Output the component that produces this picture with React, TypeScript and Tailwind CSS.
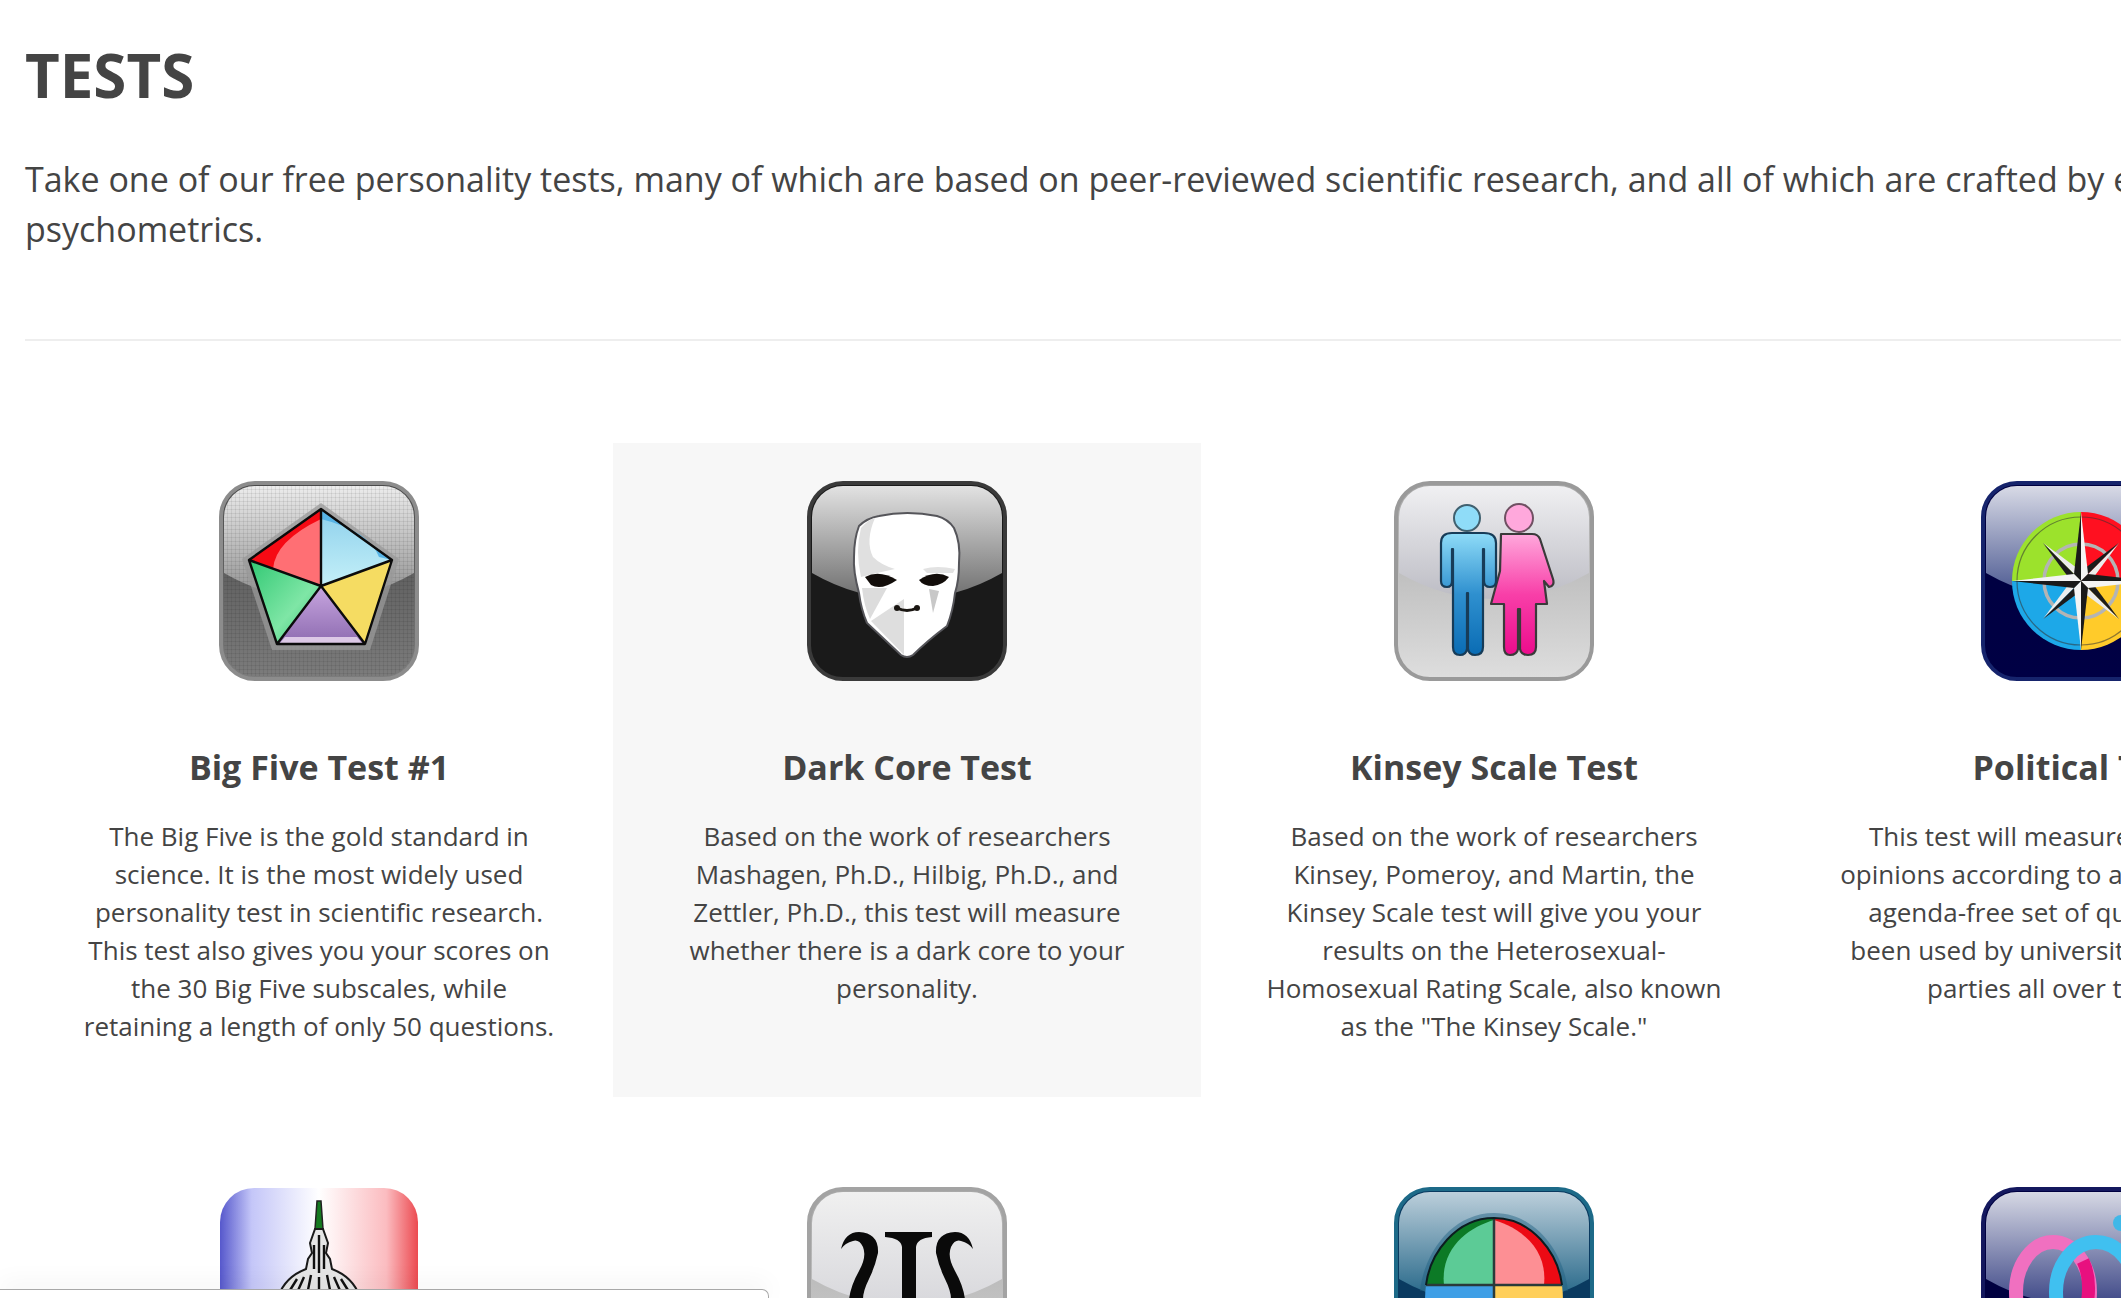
import type { ReactNode } from "react";

interface IconFrameProps {
  id: string;
  border: string;
  glossTop: string;
  glossBottom: string;
  lowerTop: string;
  lowerBottom: string;
  children: ReactNode;
}

// shared glossy rounded square that every test icon sits on
function IconFrame({ id, border, glossTop, glossBottom, lowerTop, lowerBottom, children }: IconFrameProps) {
  return (
    <svg viewBox="0 0 200 200" className="w-[200px] h-[200px] mx-auto block blur-[0.7px]">
      <defs>
        <linearGradient id={`${id}-gloss`} x1="0" y1="0" x2="0" y2="1">
          <stop offset="0" stopColor={glossTop} />
          <stop offset="1" stopColor={glossBottom} />
        </linearGradient>
        <linearGradient id={`${id}-lower`} x1="0" y1="0" x2="0" y2="1">
          <stop offset="0" stopColor={lowerTop} />
          <stop offset="1" stopColor={lowerBottom} />
        </linearGradient>
      </defs>
      <rect x="2" y="2" width="196" height="196" rx="34" fill={`url(#${id}-lower)`} stroke={border} strokeWidth="4" />
      <path
        d="M5 92V36A31 31 0 0 1 36 5H164A31 31 0 0 1 195 36V92Q150 118 100 118T5 92Z"
        fill={`url(#${id}-gloss)`}
      />
      {children}
    </svg>
  );
}

function PentagonIcon() {
  return (
    <IconFrame id="pent" border="#8c8c8c" glossTop="#ececec" glossBottom="#8f8f8f" lowerTop="#4a4a4a" lowerBottom="#7c7c7c">
      <defs>
        <pattern id="weave" width="4" height="4" patternUnits="userSpaceOnUse">
          <path d="M0 0H4M0 0V4" stroke="#000" strokeOpacity="0.14" strokeWidth="1" />
        </pattern>
        <linearGradient id="sky" x1="0" y1="0" x2="0" y2="1">
          <stop offset="0" stopColor="#8ed0ec" />
          <stop offset="1" stopColor="#c4f0f8" />
        </linearGradient>
        <linearGradient id="leaf" x1="0" y1="0" x2="1" y2="1">
          <stop offset="0" stopColor="#30c873" />
          <stop offset="0.6" stopColor="#7fe6a6" />
          <stop offset="1" stopColor="#2fc56e" />
        </linearGradient>
        <linearGradient id="plum" x1="0" y1="0" x2="0" y2="1">
          <stop offset="0" stopColor="#c8a6e0" />
          <stop offset="1" stopColor="#8d6bb0" />
        </linearGradient>
      </defs>
      <rect x="5" y="5" width="190" height="190" rx="31" fill="url(#weave)" />
      <path d="M102 22L180 78L151 169H53L23 78Z" fill="#9a9a9a" opacity="0.75" />
      <path d="M102 28L30 79L102 105Z" fill="#ff6f74" />
      <path d="M102 28L30 79L54 88Q56 60 102 38Z" fill="#f60a14" />
      <path d="M102 28V105L173 79Z" fill="url(#sky)" />
      <path d="M102 28V38Q150 50 160 76L173 79Z" fill="#58b4e6" />
      <path d="M30 79L58 163L102 105Z" fill="url(#leaf)" />
      <path d="M173 79L146 163L102 105Z" fill="#f5dc62" />
      <path d="M58 163H146L102 105Z" fill="url(#plum)" />
      <path d="M66 156H138L144 163H60Z" fill="#dcc8e6" />
      <path
        d="M102 28L173 79L146 163H58L30 79ZM102 28V105M30 79L102 105L173 79M58 163L102 105L146 163"
        fill="none"
        stroke="#0b0b0b"
        strokeWidth="2.4"
        strokeLinejoin="round"
      />
    </IconFrame>
  );
}

function MaskIcon() {
  return (
    <IconFrame id="mask" border="#3a3a3a" glossTop="#e2e2e2" glossBottom="#6e6e6e" lowerTop="#1a1a1a" lowerBottom="#1a1a1a">
      <path
        d="M52 45Q60 37 72 35Q100 29 130 35Q141 38 147 47Q154 62 152 82Q152 100 148 112Q146 130 140 145Q120 160 106 174Q100 178 94 174L60 142Q54 128 52 112Q46 90 47 76Q47 58 52 45Z"
        fill="#ffffff"
        stroke="#55555a"
        strokeWidth="2"
      />
      <path d="M54 47Q62 38 68 37Q58 60 66 76Q74 84 88 88L70 92L54 96Q48 70 54 47Z" fill="#e0e0e0" />
      <path d="M55 107L80 107L63 138Q57 125 55 107Z" fill="#dcdcdc" />
      <path d="M64 140L97 118V174Z" fill="#dedede" />
      <path d="M122 108L132 110L126 132Z" fill="#c8c8c8" />
      <path d="M116 88Q130 84 148 88L146 92H120Z" fill="#e2e2e2" />
      <path d="M58 96Q72 88 90 99Q74 110 64 104Z" fill="#120d0a" />
      <path d="M112 99Q128 88 142 96Q136 104 126 105Q116 105 112 99Z" fill="#120d0a" />
      <path d="M90 127Q100 132 110 127" fill="none" stroke="#1a1612" strokeWidth="3" strokeLinecap="round" />
      <circle cx="90" cy="127" r="3" fill="#1a1612" />
      <circle cx="110" cy="127" r="3" fill="#1a1612" />
    </IconFrame>
  );
}

function CoupleIcon() {
  return (
    <IconFrame id="couple" border="#9a9a9a" glossTop="#f0f0f2" glossBottom="#bcbcc4" lowerTop="#a6a6a6" lowerBottom="#dedede">
      <defs>
        <linearGradient id="man" x1="0" y1="0" x2="0" y2="1">
          <stop offset="0" stopColor="#8fdcf8" />
          <stop offset="0.5" stopColor="#2f90cf" />
          <stop offset="1" stopColor="#0a6cb4" />
        </linearGradient>
        <linearGradient id="woman" x1="0" y1="0" x2="0" y2="1">
          <stop offset="0" stopColor="#ffa8dc" />
          <stop offset="0.5" stopColor="#f83fa8" />
          <stop offset="1" stopColor="#ec0c8c" />
        </linearGradient>
      </defs>
      <path
        d="M107 53H138Q144 53 146 58L159 98Q161 105 155 106L150 100L153 123H142V166Q142 174 134 174Q127 174 126 168V128H124V168Q123 174 116 174Q110 174 110 166V123H97L106 90Z"
        fill="url(#woman)"
        stroke="#3a3a3a"
        strokeWidth="2.2"
        strokeLinejoin="round"
      />
      <path
        d="M58 52H90Q102 52 102 62V100Q102 106 96 106Q90 106 90 100V68H89V166Q89 174 81 174Q75 174 74 168V112H73V168Q72 174 66 174Q59 174 59 166V68H58V100Q58 106 53 106Q47 106 47 100V62Q47 52 58 52Z"
        fill="url(#man)"
        stroke="#173c58"
        strokeWidth="2.2"
        strokeLinejoin="round"
      />
      <circle cx="73" cy="37" r="13" fill="#8fdcf8" stroke="#40606f" strokeWidth="2" />
      <circle cx="125" cy="37" r="14" fill="#ffa8dc" stroke="#6f5062" strokeWidth="2" />
    </IconFrame>
  );
}

function CompassIcon() {
  const points = [0, 90, 180, 270];
  const minor = [45, 135, 225, 315];
  return (
    <IconFrame id="comp" border="#16246c" glossTop="#d8dae6" glossBottom="#46548e" lowerTop="#000040" lowerBottom="#000044">
      <path d="M100 100V31A69 69 0 0 0 31 100Z" fill="#9ce22c" />
      <path d="M100 100V31A69 69 0 0 1 169 100Z" fill="#ff1020" />
      <path d="M100 100H31A69 69 0 0 0 100 169Z" fill="#1da8e8" />
      <path d="M100 100H169A69 69 0 0 1 100 169Z" fill="#ffcb2a" />
      <circle cx="100" cy="100" r="64" fill="none" stroke="#333" strokeOpacity="0.55" strokeWidth="1.2" />
      <circle cx="100" cy="100" r="37" fill="none" stroke="#b4b4b4" strokeWidth="3.5" />
      {minor.map((a) => (
        <g key={a} transform={`rotate(${a} 100 100)`}>
          <path d="M100 46L107 93L100 100Z" fill="#ececec" />
          <path d="M100 46L93 93L100 100Z" fill="#1c1c1c" />
        </g>
      ))}
      {points.map((a) => (
        <g key={a} transform={`rotate(${a} 100 100)`}>
          <path d="M100 31L107 93L100 100Z" fill="#f4f4f4" />
          <path d="M100 31L93 93L100 100Z" fill="#1a1a1a" />
        </g>
      ))}
    </IconFrame>
  );
}

function CapitolIcon() {
  return (
    <svg viewBox="0 0 200 200" className="w-[200px] h-[200px] mx-auto block blur-[0.7px]">
      <defs>
        <linearGradient id="flag" x1="0" y1="0" x2="1" y2="0">
          <stop offset="0" stopColor="#5658cc" />
          <stop offset="0.16" stopColor="#c4c6f8" />
          <stop offset="0.5" stopColor="#ffffff" />
          <stop offset="0.84" stopColor="#fbbcc0" />
          <stop offset="1" stopColor="#ec4a50" />
        </linearGradient>
      </defs>
      <rect x="1" y="1" width="198" height="198" rx="34" fill="url(#flag)" />
      <path d="M98 14H102L104 42H96Z" fill="#157a20" stroke="#222" strokeWidth="1.5" />
      <path
        d="M96 42H104L109 56L107 66L111 72L113 82Q134 90 141 110H59Q66 90 87 82L89 72L93 66L91 56Z"
        fill="#e6e6e6"
        stroke="#1a1a1a"
        strokeWidth="2"
      />
      <path
        d="M95 58V82M100 48V86M105 58V82M78 92L68 108M85 90L77 108M92 88L88 108M108 88L112 108M115 90L123 108M122 92L132 108M100 90V108"
        stroke="#111"
        strokeWidth="2.4"
      />
    </svg>
  );
}

function PsiIcon() {
  return (
    <IconFrame id="psi" border="#a3a3a3" glossTop="#f0f0f0" glossBottom="#d8d8dc" lowerTop="#a8a8a8" lowerBottom="#d4d4d4">
      <path d="M78 45H125V50Q110 51 109 60V112H95V60Q94 51 78 50Z" fill="#0a0a0a" />
      <path d="M34 62Q38 45 52 45Q72 46 71 66Q68 80 62 92Q56 104 56 112H42Q44 98 52 84Q60 70 56 60Q52 52 46 54Q38 56 34 62Z" fill="#0a0a0a" />
      <path d="M166 62Q162 45 148 45Q128 46 129 66Q132 80 138 92Q144 104 144 112H158Q156 98 148 84Q140 70 144 60Q148 52 154 54Q162 56 166 62Z" fill="#0a0a0a" />
    </IconFrame>
  );
}

function EggIcon() {
  return (
    <IconFrame id="egg" border="#1d6a88" glossTop="#bccfdb" glossBottom="#1a5f82" lowerTop="#0a3a60" lowerBottom="#0a3a60">
      <path d="M100 26C58 26 30 66 26 104H174C170 66 142 26 100 26Z" fill="#1f5f80" opacity="0.45" />
      <path d="M100 31C62 31 36 66 32 98H100Z" fill="#0c7a26" />
      <path d="M100 33C76 40 46 60 50 98H100Z" fill="#5ccb96" />
      <path d="M100 31C138 31 164 66 168 98H100Z" fill="#ec0a14" />
      <path d="M100 33C124 40 154 60 150 98H100Z" fill="#fd8f94" />
      <path d="M32 98H100V170H40Q28 130 32 98Z" fill="#3f9fe6" />
      <path d="M168 98H100V170H160Q172 130 168 98Z" fill="#ffcf5a" />
      <path d="M100 31V170M32 98H168" stroke="#2a3a3a" strokeWidth="2.5" />
      <path d="M100 31C62 31 36 66 32 98M100 31C138 31 164 66 168 98" fill="none" stroke="#0c1c20" strokeWidth="2" />
    </IconFrame>
  );
}

function RingsIcon() {
  return (
    <IconFrame id="rings" border="#14185e" glossTop="#d6d8e4" glossBottom="#3c4686" lowerTop="#000040" lowerBottom="#000040">
      <ellipse cx="72" cy="105" rx="37" ry="50" fill="none" stroke="#f070c0" strokeWidth="14" />
      <ellipse cx="115" cy="105" rx="40" ry="50" fill="none" stroke="#40c0f0" strokeWidth="14" />
      <path d="M102 74Q112 95 104 128" fill="none" stroke="#e8107f" strokeWidth="13" />
      <circle cx="140" cy="36" r="8" fill="#40b8e8" />
    </IconFrame>
  );
}

interface TestCardProps {
  icon: ReactNode;
  title?: string;
  body?: ReactNode;
  active?: boolean;
}

function TestCard({ icon, title, body, active }: TestCardProps) {
  return (
    <div className={active ? "h-[654px] bg-[#f7f7f7] px-[52px] pt-[38px] text-center" : "h-[654px] px-[52px] pt-[38px] text-center"}>
      {icon}
      {title && <h3 className="mt-[61px] text-[34px] leading-[50px] font-bold">{title}</h3>}
      {body && <p className="mt-[25px] text-[26px] leading-[38px]">{body}</p>}
    </div>
  );
}

export default function App() {
  return (
    <div className="relative h-[1298px] overflow-hidden bg-white pl-[25px] pt-[31px] text-[#444444] font-['Open_Sans',sans-serif]">
      <div className="w-[2350px]">
        <h1 className="text-[60px] leading-[88px] font-bold">TESTS</h1>
        <p className="mt-[35px] text-[34px] leading-[50px]">
          Take one of our free personality tests, many of which are based on peer-reviewed scientific research, and all of which are crafted by experts in
          <br />
          psychometrics.
        </p>
        <hr className="mt-[85px] border-0 h-[2px] bg-[#eeeeee]" />

        <div className="mt-[102px] grid grid-cols-[588px_588px_586px_588px] gap-y-[52px]">
          <TestCard
            icon={<PentagonIcon />}
            title="Big Five Test #1"
            body="The Big Five is the gold standard in science. It is the most widely used personality test in scientific research. This test also gives you your scores on the 30 Big Five subscales, while retaining a length of only 50 questions."
          />
          <TestCard
            active
            icon={<MaskIcon />}
            title="Dark Core Test"
            body="Based on the work of researchers Mashagen, Ph.D., Hilbig, Ph.D., and Zettler, Ph.D., this test will measure whether there is a dark core to your personality."
          />
          <TestCard
            icon={<CoupleIcon />}
            title="Kinsey Scale Test"
            body='Based on the work of researchers Kinsey, Pomeroy, and Martin, the Kinsey Scale test will give you your results on the Heterosexual-Homosexual Rating Scale, also known as the "The Kinsey Scale."'
          />
          <TestCard
            icon={<CompassIcon />}
            title="Political Test"
            body={
              <span className="block whitespace-nowrap">
                This test will measure your political
                <br />
                opinions according to a well-researched
                <br />
                agenda-free set of questions. It has
                <br />
                been used by universities and political
                <br />
                parties all over the world.
              </span>
            }
          />
          <TestCard icon={<CapitolIcon />} />
          <TestCard icon={<PsiIcon />} />
          <TestCard icon={<EggIcon />} />
          <TestCard icon={<RingsIcon />} />
        </div>
      </div>

      {/* popup peeking in at the bottom */}
      <div className="absolute left-0 bottom-0 w-[769px] h-[9px] bg-white border-t border-r border-[#a8a8a8] rounded-tr-[7px] shadow-[0_-4px_24px_rgba(0,0,0,0.08)]" />
    </div>
  );
}
